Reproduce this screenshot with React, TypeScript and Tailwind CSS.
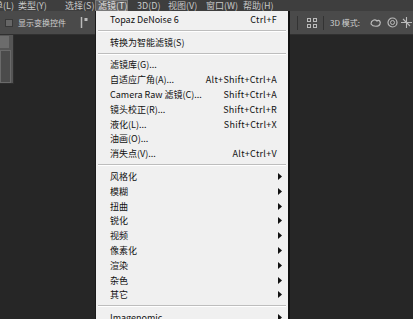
import { ReactNode } from 'react'

const font = { fontFamily: '"Noto Sans CJK SC", "Noto Sans", sans-serif' }

// widths so each label starts where the screenshot has it
const topMenus = [
  { label: '单(L)', w: 'w-[24px] -ml-[6px]' },
  { label: '类型(Y)', w: 'w-[47px]' },
  { label: '选择(S)', w: 'w-[30px]' },
  { label: '滤镜(T)', w: 'w-[33px] pl-[2px]', active: true },
  { label: '3D(D)', w: 'w-[40px] pl-[9px]' },
  { label: '视图(V)', w: 'w-[38px]' },
  { label: '窗口(W)', w: 'w-[37px]' },
  { label: '帮助(H)', w: 'w-[40px]' },
]

type Item = { label: string; shortcut?: string; sub?: boolean } | 'sep'

const items: Item[] = [
  { label: 'Topaz DeNoise 6', shortcut: 'Ctrl+F' },
  'sep',
  { label: '转换为智能滤镜(S)' },
  'sep',
  { label: '滤镜库(G)...' },
  { label: '自适应广角(A)...', shortcut: 'Alt+Shift+Ctrl+A' },
  { label: 'Camera Raw 滤镜(C)...', shortcut: 'Shift+Ctrl+A' },
  { label: '镜头校正(R)...', shortcut: 'Shift+Ctrl+R' },
  { label: '液化(L)...', shortcut: 'Shift+Ctrl+X' },
  { label: '油画(O)...' },
  { label: '消失点(V)...', shortcut: 'Alt+Ctrl+V' },
  'sep',
  { label: '风格化', sub: true },
  { label: '模糊', sub: true },
  { label: '扭曲', sub: true },
  { label: '锐化', sub: true },
  { label: '视频', sub: true },
  { label: '像素化', sub: true },
  { label: '渲染', sub: true },
  { label: '杂色', sub: true },
  { label: '其它', sub: true },
  'sep',
  { label: 'Imagenomic', sub: true },
]

function Arrow() {
  return (
    <svg width="4" height="7" viewBox="0 0 4 7" className="shrink-0">
      <path d="M0 0 L4 3.5 L0 7 Z" fill="#111" />
    </svg>
  )
}

function MenuRow({ children }: { children: ReactNode }) {
  return <div className="flex items-center h-[14.8px] pl-[14px] pr-[6px]">{children}</div>
}

export default function App() {
  return (
    <div className="relative w-[413px] h-[319px] overflow-hidden bg-[#262626] flex flex-col" style={font}>
      {/* menu bar */}
      <div className="h-[11px] bg-[#3e3e3e] flex items-center text-[9px] leading-none text-[#c8c8c8] shrink-0">
        {topMenus.map((m) => (
          <div
            key={m.label}
            className={`h-full flex items-center shrink-0 whitespace-nowrap ${m.w} ${
              m.active ? 'bg-[#5a5a5a] border border-[#7a7a7a] text-[#e0e0e0]' : ''
            }`}
          >
            {m.label}
          </div>
        ))}
      </div>

      {/* options bar */}
      <div className="h-[24px] bg-[#4a4a4a] border-b border-[#303030] flex items-center text-[8px] text-[#d0d0d0] shrink-0">
        <div className="w-[8px] h-[8px] ml-[5px] bg-[#666] border border-[#383838]" />
        <span className="ml-[5px]">显示变换控件</span>
        <svg width="9" height="11" viewBox="0 0 9 11" className="ml-[14px]">
          <path d="M1.5 0 V11" stroke="#bbb" strokeWidth="1.5" />
          <rect x="4.5" y="1" width="3" height="3" fill="#bbb" />
        </svg>
        <div className="flex-1" />
        <div className="w-px h-[14px] bg-[#333]" />
        <svg width="10" height="10" viewBox="0 0 10 10" className="ml-[9px]">
          <rect x="0.5" y="0.5" width="3" height="3" fill="none" stroke="#bbb" />
          <rect x="6.5" y="0.5" width="3" height="3" fill="none" stroke="#bbb" />
          <rect x="0.5" y="6.5" width="3" height="3" fill="none" stroke="#bbb" />
          <rect x="6.5" y="6.5" width="3" height="3" fill="none" stroke="#bbb" />
        </svg>
        <div className="w-px h-[14px] bg-[#333] ml-[6px]" />
        <span className="ml-[6px]">3D 模式:</span>
        <svg width="12" height="10" viewBox="0 0 12 10" className="ml-[10px]">
          <path d="M1 6 C1 2 5 1 7 3 C9 1 11 4 10 6 C9 9 3 9 1 6 Z" fill="none" stroke="#bbb" strokeWidth="1.2" />
        </svg>
        <svg width="11" height="11" viewBox="0 0 11 11" className="ml-[5px]">
          <circle cx="5.5" cy="5.5" r="4.5" fill="none" stroke="#bbb" strokeWidth="1.2" />
          <circle cx="5.5" cy="5.5" r="2" fill="none" stroke="#bbb" />
        </svg>
        <svg width="11" height="11" viewBox="0 0 11 11" className="ml-[3px] mr-[1px]">
          <path d="M5.5 0 V11 M0 5.5 H11 M2 2 L9 9" stroke="#bbb" strokeWidth="1.1" />
        </svg>
      </div>

      {/* workspace */}
      <div className="flex-1 flex">
        <div className="w-[14px] flex flex-col">
          <div className="h-[49px] bg-[#555] border-r border-b border-[#2e2e2e] flex flex-col">
            <div className="h-[12px] w-[9px] mt-[1px] bg-[#6c6c6c]" />
            <div className="flex-1 mt-[2px] mr-[2px] border border-[#6a6a6a] bg-[#4b4b4b]" />
          </div>
        </div>
      </div>

      {/* filter menu */}
      <div className="absolute left-[95px] top-[11px] w-[195px] bottom-0 bg-[#f0f0f0] border-l border-[#1a1a1a] border-r-2 border-r-[#111] text-[9px] leading-none text-[#111] pt-[1px]">
        {items.map((it, i) =>
          it === 'sep' ? (
            <div key={i} className="h-[8px] flex items-center px-[2px]">
              <div className="h-[2px] w-full border-t border-[#bdbdbd] border-b border-b-white" />
            </div>
          ) : (
            <MenuRow key={i}>
              <span className="flex-1 whitespace-nowrap">{it.label}</span>
              {it.shortcut && <span className="whitespace-nowrap mr-[5px] tracking-[0.3px]">{it.shortcut}</span>}
              {it.sub && <Arrow />}
            </MenuRow>
          ),
        )}
      </div>
    </div>
  )
}
